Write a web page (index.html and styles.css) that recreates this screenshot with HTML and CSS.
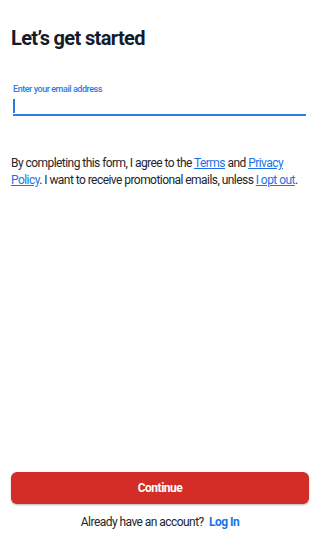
FILE: index.html
```html
<!DOCTYPE html>
<html>
<head>
<meta charset="utf-8">
<link rel="stylesheet" href="styles.css">
</head>
<body>
<div class="page">
  <main class="content">
    <h1 class="title">Let’s get started</h1>
    <label class="field">
      <span class="field-label">Enter your email address</span>
      <span class="field-input"><span class="cursor"></span></span>
    </label>
    <p class="terms">By completing this form, I agree to the <a href="#">Terms</a> and <a href="#">Privacy Policy</a>. I want to receive promotional emails, unless <a href="#">I opt out</a>.</p>
  </main>
  <footer class="footer">
    <button class="continue">Continue</button>
    <p class="login">Already have an account? <a href="#">Log In</a></p>
  </footer>
</div>
</body>
</html>
```
FILE: styles.css
```css
* { box-sizing: border-box; }
html, body { margin: 0; padding: 0; background: #fff; }
body { font-family: Roboto, "Noto Sans", sans-serif; color: #1c1f2a; }
.page {
  height: 551px;
  display: flex;
  flex-direction: column;
  padding: 0 11px;
}
.content { flex: 1; }
.title {
  margin: 26px 0 0;
  font-size: 20px;
  line-height: 24px;
  font-weight: 700;
  letter-spacing: -0.65px;
  color: #141b2d;
}
.field {
  display: block;
  margin-top: 33px;
  padding: 0 3px 0 2px;
}
.field-label {
  display: block;
  font-size: 9px;
  line-height: 12px;
  letter-spacing: -0.45px;
  color: #2b7de0;
  font-weight: 500;
}
.field-input {
  display: block;
  height: 21px;
  border-bottom: 2px solid #2b7de0;
  padding-top: 4px;
}
.cursor {
  display: block;
  width: 2px;
  height: 14px;
  background: #2b7de0;
}
.terms {
  margin: 39px 0 0;
  font-size: 12px;
  line-height: 17px;
  letter-spacing: -0.55px;
  color: #22252e;
}
.terms a, .login a { color: #1a73e8; }
.terms a { text-decoration: underline; }
.footer {
  padding-bottom: 21px;
}
.continue {
  display: block;
  width: 298px;
  height: 32px;
  border: 0;
  border-radius: 6px;
  background: #d42d27;
  color: #fff;
  font-family: Roboto, sans-serif;
  font-size: 12px;
  letter-spacing: -0.5px;
  font-weight: 700;
  box-shadow: 0 1px 2px rgba(0,0,0,0.3);
}
.login {
  margin: 10px 0 0;
  text-align: center;
  font-size: 12px;
  line-height: 16px;
  letter-spacing: -0.55px;
  color: #22252e;
}
.login a {
  text-decoration: none;
  font-weight: 700;
  margin-left: 3px;
}
```
